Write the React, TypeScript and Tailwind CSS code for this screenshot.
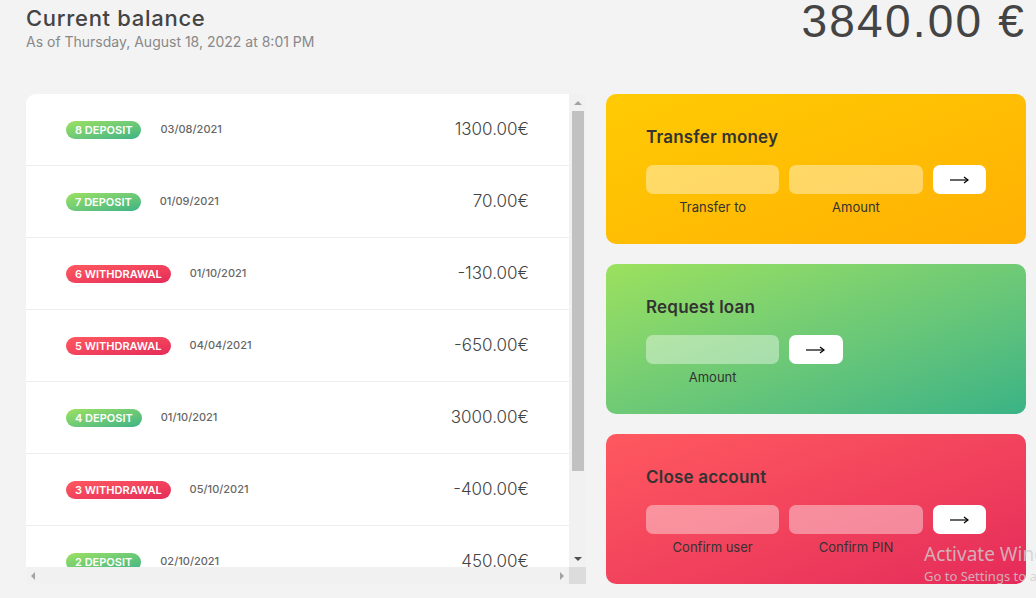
import React from "react";

type Movement = {
  n: number;
  kind: "deposit" | "withdrawal";
  date: string;
  value: string;
};

const movements: Movement[] = [
  { n: 8, kind: "deposit", date: "03/08/2021", value: "1300.00€" },
  { n: 7, kind: "deposit", date: "01/09/2021", value: "70.00€" },
  { n: 6, kind: "withdrawal", date: "01/10/2021", value: "-130.00€" },
  { n: 5, kind: "withdrawal", date: "04/04/2021", value: "-650.00€" },
  { n: 4, kind: "deposit", date: "01/10/2021", value: "3000.00€" },
  { n: 3, kind: "withdrawal", date: "05/10/2021", value: "-400.00€" },
  { n: 2, kind: "deposit", date: "02/10/2021", value: "450.00€" },
];

function Arrow({ dir, color }: { dir: "up" | "down" | "left" | "right"; color: string }) {
  const pts = {
    up: "0,4 4,0 8,4",
    down: "0,0 8,0 4,4",
    left: "4,0 4,8 0,4",
    right: "0,0 0,8 4,4",
  }[dir];
  const horiz = dir === "left" || dir === "right";
  return (
    <svg width={horiz ? 4 : 8} height={horiz ? 8 : 4} viewBox={horiz ? "0 0 4 8" : "0 0 8 4"}>
      <polygon points={pts} fill={color} />
    </svg>
  );
}

function MovementRow({ m }: { m: Movement }) {
  const badge =
    m.kind === "deposit"
      ? "bg-linear-to-tl from-[#39b385] to-[#9be15d]"
      : "bg-linear-to-tl from-[#e52a5a] to-[#ff585f]";
  return (
    <div className="flex h-[72px] shrink-0 items-center border-b border-[#eee] pl-10 pr-10">
      <span className={`${badge} rounded-full px-[9px] py-px text-[11px] leading-[16px] font-semibold uppercase text-white`}>
        {m.n} {m.kind}
      </span>
      <span className="ml-[19px] text-[11px] font-medium text-[#666]">{m.date}</span>
      <span className="ml-auto text-[17px] font-light text-[#444]">{m.value}</span>
    </div>
  );
}

function Field({ label }: { label: string }) {
  return (
    <div className="flex flex-col gap-1">
      <div className="h-[29px] rounded-[7px] bg-white/40" />
      <span className="text-center text-[13px] leading-[19px] text-[#333]">{label}</span>
    </div>
  );
}

function Go() {
  return (
    <div className="flex h-[29px] items-center justify-center rounded-[7px] bg-white">
      <svg width="19" height="8" viewBox="0 0 19 8" fill="none" stroke="#000" strokeWidth="1.2">
        <line x1="0" y1="4" x2="18" y2="4" />
        <polyline points="14,1 18,4 14,7" />
      </svg>
    </div>
  );
}

function Operation({
  title,
  gradient,
  children,
  cols,
}: {
  title: string;
  gradient: string;
  children: React.ReactNode;
  cols: string;
}) {
  return (
    <div className={`${gradient} h-[150px] rounded-[10px] px-10 pt-[30px]`}>
      <h2 className="mb-[15px] text-[17px] leading-[26px] font-semibold tracking-[0.2px] text-[#333]">{title}</h2>
      <div className={`grid ${cols} gap-x-[10px]`}>{children}</div>
    </div>
  );
}

export default function App() {
  return (
    <div className="relative min-h-screen overflow-hidden bg-[#f3f3f3] font-['Inter','Noto_Sans',sans-serif] text-[#444]">
      <div className="ml-[26px] w-[1000px]">
        {/* Balance */}
        <div className="flex h-[94px] items-start justify-between">
          <div className="pt-[4px]">
            <p className="text-[22px] leading-[28px] font-medium tracking-[0.7px] text-[#444]">Current balance</p>
            <p className="text-[14px] leading-[20px] text-[#888]">As of Thursday, August 18, 2022 at 8:01 PM</p>
          </div>
          <p className="-mt-[2px] font-['Liberation_Sans',Arial,sans-serif] text-[46px] leading-none tracking-[2.2px] text-[#444]">
            3840.00 €
          </p>
        </div>

        <div className="grid grid-cols-[560px_420px] gap-x-5">
          {/* Movements */}
          <div className="grid h-[490px] grid-cols-[543px_17px] grid-rows-[473px_17px] overflow-hidden rounded-tl-[10px] bg-white">
            <div className="flex flex-col overflow-hidden">
              {movements.map((m) => (
                <MovementRow key={m.n} m={m} />
              ))}
            </div>
            <div className="flex flex-col items-center bg-[#f1f1f1]">
              <div className="flex h-[17px] items-center justify-center">
                <Arrow dir="up" color="#a3a3a3" />
              </div>
              <div className="h-[360px] w-[12px] bg-[#c1c1c1]" />
              <div className="flex-1" />
              <div className="flex h-[17px] items-center justify-center">
                <Arrow dir="down" color="#505050" />
              </div>
            </div>
            <div className="flex items-center justify-between bg-[#f1f1f1] px-[5px]">
              <Arrow dir="left" color="#a3a3a3" />
              <Arrow dir="right" color="#a3a3a3" />
            </div>
            <div className="bg-[#dcdcdc]" />
          </div>

          {/* Operations */}
          <div className="flex flex-col gap-5">
            <Operation title="Transfer money" gradient="bg-linear-to-tl from-[#ffb003] to-[#ffcb03]" cols="grid-cols-[2.5fr_2.5fr_1fr]">
              <Field label="Transfer to" />
              <Field label="Amount" />
              <Go />
            </Operation>
            <Operation title="Request loan" gradient="bg-linear-to-tl from-[#39b385] to-[#9be15d]" cols="grid-cols-[2.5fr_1fr_2.5fr]">
              <Field label="Amount" />
              <Go />
            </Operation>
            <Operation title="Close account" gradient="bg-linear-to-tl from-[#e52a5a] to-[#ff585f]" cols="grid-cols-[2.5fr_2.5fr_1fr]">
              <Field label="Confirm user" />
              <Field label="Confirm PIN" />
              <Go />
            </Operation>
          </div>
        </div>
      </div>

      {/* OS watermark */}
      <div className="pointer-events-none absolute left-[924px] top-[541px] whitespace-nowrap font-['Noto_Sans',sans-serif] text-[#cfcfcf]/80">
        <p className="text-[19px] leading-[26px]">Activate Windows</p>
        <p className="text-[13px] leading-[18px]">Go to Settings to activate Windows.</p>
      </div>
    </div>
  );
}
